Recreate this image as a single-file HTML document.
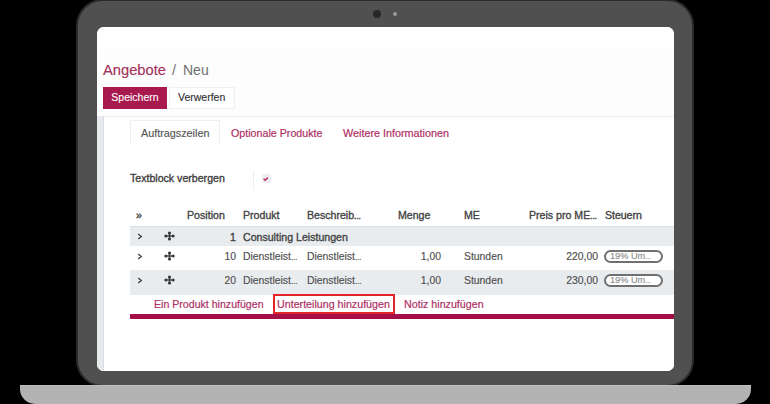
<!DOCTYPE html>
<html><head><meta charset="utf-8">
<style>
*{margin:0;padding:0;box-sizing:border-box}
html,body{width:770px;height:404px;overflow:hidden;background:#000}
body{position:relative;font-family:"Liberation Sans",sans-serif}
.a{position:absolute;white-space:nowrap}
.crim{color:#ae3066;-webkit-text-stroke:0.2px #ae3066}
.t{font-size:10.4px;color:#4f4f4f;line-height:14px;-webkit-text-stroke:0.15px #4f4f4f}
.b{color:#444;line-height:14px;font-size:10.6px;-webkit-text-stroke:0.35px #444}
.el{font-size:8.6px;letter-spacing:-0.2px}
</style></head><body>
<div class="a " style="left:76px;top:-1px;width:618px;height:388px;background:#505050;border:2px solid #2b2b2b;border-radius:27px"></div>
<div class="a " style="left:373px;top:10px;width:8px;height:8px;border-radius:50%;background:#272727"></div>
<div class="a " style="left:393px;top:12px;width:4px;height:4px;border-radius:50%;background:#9b9b9b"></div>
<div class="a " style="left:20px;top:385px;width:731px;height:19px;background:#b3b3b3;border-top:1px solid #bebebe;border-radius:0 0 15px 15px"></div>
<div class="a" style="left:97px;top:27px;width:577px;height:344px;background:#fff;border-radius:7px;overflow:hidden"><div class="a" style="left:0;top:0;width:577px;height:20px;background:#fff"></div><div class="a" style="left:0;top:20px;width:577px;height:324px;background:#fdfdfd"></div><div class="a" style="left:6px;top:89px;width:571px;height:255px;background:#fff"></div><div class="a" style="left:0;top:89px;width:7px;height:255px;background:#e8eaee;border-right:1.5px solid #d9dce6"></div><div class="a" style="left:6px;top:89px;width:571px;height:1px;background:#ededed"></div></div>
<div class="a " style="left:103px;top:60px;font-size:14.7px;line-height:20px;color:#a3305b;-webkit-text-stroke:0.15px #a3305b">Angebote</div>
<div class="a " style="left:172px;top:60px;font-size:14.7px;line-height:20px;color:#777">/</div>
<div class="a " style="left:183px;top:60px;font-size:14px;line-height:20px;color:#6f6f6f">Neu</div>
<div class="a " style="left:103px;top:87px;width:64px;height:22px;background:#a8194d;color:#fff;font-size:10.5px;line-height:21px;text-align:center;-webkit-text-stroke:0.1px #fff">Speichern</div>
<div class="a " style="left:169px;top:87px;width:66px;height:22px;border:1px solid #eef0f2;background:#fff;color:#333;font-size:10.5px;line-height:19px;padding-left:8px;-webkit-text-stroke:0.15px #333">Verwerfen</div>
<div class="a " style="left:130px;top:120px;width:90px;height:25px;border:1px solid #efefef;border-bottom:none"></div>
<div class="a " style="left:141px;top:126px;font-size:10.8px;line-height:14px;color:#555;-webkit-text-stroke:0.15px #555">Auftragszeilen</div>
<div class="a crim" style="left:231px;top:126px;font-size:10.7px;line-height:14px">Optionale Produkte</div>
<div class="a crim" style="left:343px;top:126px;font-size:10.8px;line-height:14px">Weitere Informationen</div>
<div class="a b" style="left:130px;top:171px;color:#3f3f3f;-webkit-text-stroke:0.35px #3f3f3f">Textblock verbergen</div>
<div class="a " style="left:253px;top:171px;width:1px;height:19px;background:#edeff2"></div>
<div class="a " style="left:262px;top:174px;width:9px;height:9px;background:#eceef2;border-radius:1px"></div>
<svg class="a" style="left:262px;top:174px" width="9" height="9" viewBox="0 0 9 9"><path d="M1.6 4.8 L3.1 6.2 L5.9 3.6" stroke="#be2a66" stroke-width="1.5" fill="none"/></svg>
<div class="a b" style="left:136px;top:208px;letter-spacing:0px">»</div>
<div class="a b" style="left:187px;top:208px;letter-spacing:0.02px">Position</div>
<div class="a b" style="left:243px;top:208px;letter-spacing:0px">Produkt</div>
<div class="a b" style="left:307px;top:208px;letter-spacing:0px">Beschreib<span class="el">...</span></div>
<div class="a b" style="left:398px;top:208px;letter-spacing:0px">Menge</div>
<div class="a b" style="left:464px;top:208px;letter-spacing:0px">ME</div>
<div class="a b" style="left:529px;top:208px;letter-spacing:0px">Preis pro ME<span class="el">...</span></div>
<div class="a b" style="left:605px;top:208px;letter-spacing:-0.05px">Steuern</div>
<div class="a " style="left:130px;top:226px;width:544px;height:20px;background:#e9ecef;border-top:1px solid #d8dfe6"></div>
<div class="a " style="left:130px;top:270px;width:544px;height:25px;background:#e9ecef"></div>
<svg class="a" style="left:137px;top:233px" width="6" height="7" viewBox="0 0 6 7"><path d="M1.2 1 L4.4 3.5 L1.2 6" stroke="#3a3a3a" stroke-width="1.2" fill="none"/></svg>
<svg class="a" style="left:164px;top:231px" width="11" height="10" viewBox="0 0 11 10"><g fill="#3a3a3a"><rect x="4.8" y="1.5" width="1.4" height="7"/><rect x="1.5" y="4.3" width="8" height="1.4"/><ellipse cx="5.5" cy="1.9" rx="1.6" ry="1.5"/><ellipse cx="5.5" cy="8.1" rx="1.6" ry="1.5"/><ellipse cx="1.8" cy="5" rx="1.5" ry="1.6"/><ellipse cx="9.2" cy="5" rx="1.5" ry="1.6"/></g></svg>
<div class="a b" style="left:200px;width:36px;text-align:right;top:230px;letter-spacing:0">1</div>
<div class="a b" style="left:243px;top:230px">Consulting Leistungen</div>
<svg class="a" style="left:137px;top:253px" width="6" height="7" viewBox="0 0 6 7"><path d="M1.2 1 L4.4 3.5 L1.2 6" stroke="#3a3a3a" stroke-width="1.2" fill="none"/></svg>
<svg class="a" style="left:164px;top:251px" width="11" height="10" viewBox="0 0 11 10"><g fill="#3a3a3a"><rect x="4.8" y="1.5" width="1.4" height="7"/><rect x="1.5" y="4.3" width="8" height="1.4"/><ellipse cx="5.5" cy="1.9" rx="1.6" ry="1.5"/><ellipse cx="5.5" cy="8.1" rx="1.6" ry="1.5"/><ellipse cx="1.8" cy="5" rx="1.5" ry="1.6"/><ellipse cx="9.2" cy="5" rx="1.5" ry="1.6"/></g></svg>
<div class="a t" style="left:200px;width:36px;text-align:right;top:250px">10</div>
<div class="a t" style="left:243px;top:250px">Dienstleist<span class="el">...</span></div>
<div class="a t" style="left:307px;top:250px">Dienstleist<span class="el">...</span></div>
<div class="a t" style="left:400px;width:41px;text-align:right;top:250px">1,00</div>
<div class="a t" style="left:464px;top:250px">Stunden</div>
<div class="a t" style="left:540px;width:58px;text-align:right;top:250px">220,00</div>
<div class="a " style="left:604px;top:250px;width:59px;height:13px;border:2px solid #707070;border-radius:7px;background:#fff"></div>
<div class="a " style="left:610px;top:250px;font-size:9.2px;line-height:13px;color:#8c8c8c;-webkit-text-stroke:0.15px #8c8c8c">19% Um<span style="font-size:7.5px;letter-spacing:-0.2px">...</span></div>
<svg class="a" style="left:137px;top:277px" width="6" height="7" viewBox="0 0 6 7"><path d="M1.2 1 L4.4 3.5 L1.2 6" stroke="#3a3a3a" stroke-width="1.2" fill="none"/></svg>
<svg class="a" style="left:164px;top:275px" width="11" height="10" viewBox="0 0 11 10"><g fill="#3a3a3a"><rect x="4.8" y="1.5" width="1.4" height="7"/><rect x="1.5" y="4.3" width="8" height="1.4"/><ellipse cx="5.5" cy="1.9" rx="1.6" ry="1.5"/><ellipse cx="5.5" cy="8.1" rx="1.6" ry="1.5"/><ellipse cx="1.8" cy="5" rx="1.5" ry="1.6"/><ellipse cx="9.2" cy="5" rx="1.5" ry="1.6"/></g></svg>
<div class="a t" style="left:200px;width:36px;text-align:right;top:274px">20</div>
<div class="a t" style="left:243px;top:274px">Dienstleist<span class="el">...</span></div>
<div class="a t" style="left:307px;top:274px">Dienstleist<span class="el">...</span></div>
<div class="a t" style="left:400px;width:41px;text-align:right;top:274px">1,00</div>
<div class="a t" style="left:464px;top:274px">Stunden</div>
<div class="a t" style="left:540px;width:58px;text-align:right;top:274px">230,00</div>
<div class="a " style="left:604px;top:274px;width:59px;height:13px;border:2px solid #707070;border-radius:7px;background:#fff"></div>
<div class="a " style="left:610px;top:274px;font-size:9.2px;line-height:13px;color:#8c8c8c;-webkit-text-stroke:0.15px #8c8c8c">19% Um<span style="font-size:7.5px;letter-spacing:-0.2px">...</span></div>
<div class="a crim" style="left:154px;top:297px;font-size:10.6px;line-height:14px">Ein Produkt hinzufügen</div>
<div class="a crim" style="left:277px;top:297px;font-size:10.7px;line-height:14px">Unterteilung hinzufügen</div>
<div class="a crim" style="left:404px;top:297px;font-size:10.7px;line-height:14px">Notiz hinzufügen</div>
<div class="a " style="left:273px;top:294px;width:122px;height:20px;border:2px solid #e3242b"></div>
<div class="a " style="left:130px;top:314px;width:544px;height:5px;background:#a50e46"></div>
</body></html>
